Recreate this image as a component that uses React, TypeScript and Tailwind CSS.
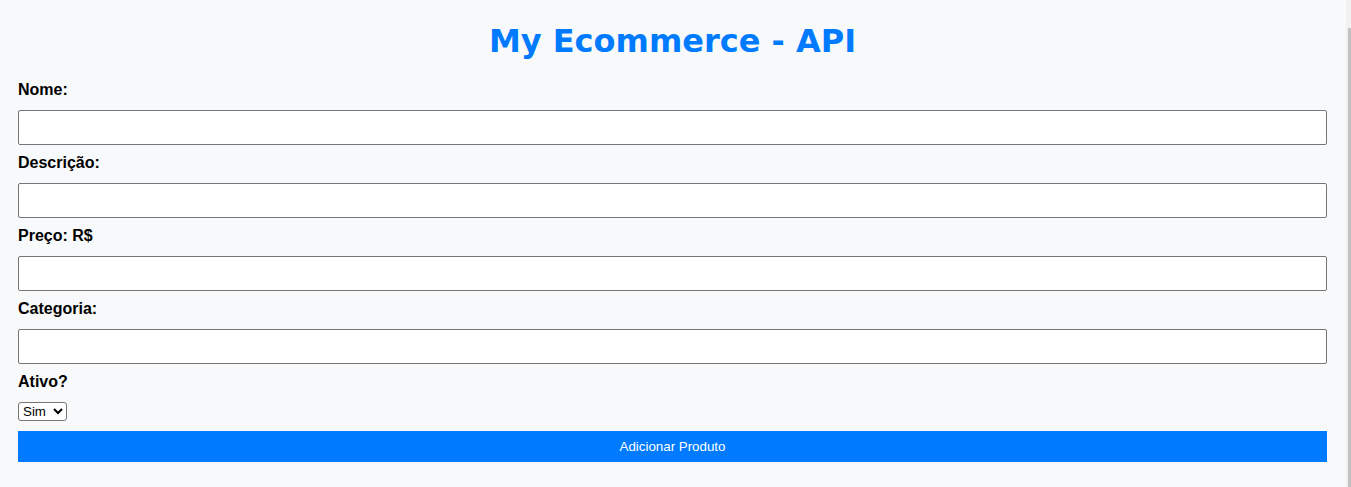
import React, { useState } from 'react';

const fields = [
  { id: 'nome', label: 'Nome:' },
  { id: 'descricao', label: 'Descrição:' },
  { id: 'preco', label: 'Preço: R$' },
  { id: 'categoria', label: 'Categoria:' },
];

export default function App() {
  const [values, setValues] = useState<Record<string, string>>({});
  const [ativo, setAtivo] = useState('sim');

  return (
    <div className="flex h-[487px] w-full overflow-hidden bg-[#f8f9fa] font-['Liberation_Sans',Arial,sans-serif] text-black">
      <main className="flex-1 pl-[18px] pr-[19px]">
        <h1 className="mt-[23px] mb-[21px] text-center font-['DejaVu_Sans',sans-serif] text-[32px] leading-[37px] font-bold text-[#007bff]">
          My Ecommerce - API
        </h1>

        <form onSubmit={(e) => e.preventDefault()}>
          {fields.map((f) => (
            <div key={f.id}>
              <label htmlFor={f.id} className="mt-[9px] mb-[11px] block text-base leading-[18px] font-bold">
                {f.label}
              </label>
              <input
                id={f.id}
                type="text"
                value={values[f.id] ?? ''}
                onChange={(e) => setValues({ ...values, [f.id]: e.target.value })}
                className="block h-[35px] w-full rounded-[2px] border border-[#767676] bg-white px-2 text-base"
              />
            </div>
          ))}

          <label htmlFor="ativo" className="mt-[9px] mb-[11px] block text-base leading-[18px] font-bold">
            Ativo?
          </label>
          <select
            id="ativo"
            value={ativo}
            onChange={(e) => setAtivo(e.target.value)}
            className="block h-[19px] w-[49px] rounded-[3px] border border-[#767676] bg-white text-[13.33px]"
          >
            <option value="sim">Sim</option>
            <option value="nao">Não</option>
          </select>

          <button
            type="submit"
            className="mt-[10px] block h-[31px] w-full bg-[#007bff] text-[13.33px] text-white"
          >
            Adicionar Produto
          </button>
        </form>
      </main>

      {/* scrollbar */}
      <div className="flex w-[5px] flex-col bg-[#f1f1f1]">
        <div className="h-[28px]" />
        <div className="ml-[2px] flex-1 bg-[#c1c1c1]" />
      </div>
    </div>
  );
}
